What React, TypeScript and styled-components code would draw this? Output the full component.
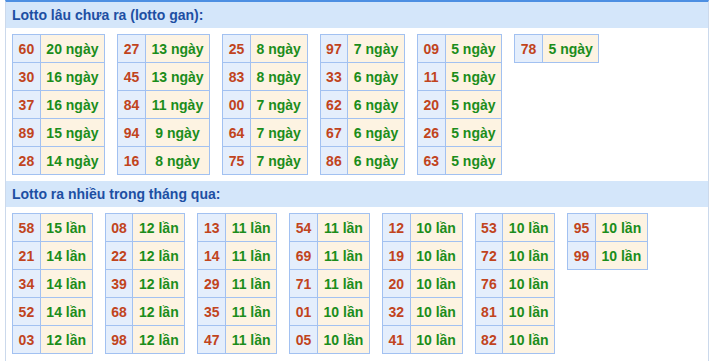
import React from "react";
import styled, { createGlobalStyle } from "styled-components";

const GlobalStyle = createGlobalStyle`
  html, body { margin: 0; padding: 0; background: #ffffff; }
  body { font-family: "Liberation Sans", Arial, sans-serif; }
`;

const Panel = styled.div`
  margin-left: 5px;
  width: 704px;
  box-sizing: border-box;
  border-top: 2px solid #4d8fe2;
  border-left: 1px solid #cbd9ec;
  border-right: 1px solid #cbd9ec;
  min-height: 370px;
`;

const SectionTitle = styled.div`
  height: 26px;
  line-height: 27px;
  padding-left: 6px;
  background: #d4e6fa;
  color: #1d4fa3;
  font-size: 14px;
  font-weight: bold;
`;

const Boards = styled.div`
  display: flex;
  flex-wrap: wrap;
  align-items: flex-start;
  gap: 12px;
  padding: 6px 0 6px 6px;
`;

const Board = styled.div`
  display: grid;
  grid-template-columns: auto auto;
  border-top: 1px solid #a2c1f1;
  border-left: 1px solid #a2c1f1;
`;

const Cell = styled.div<{ $kind: "num" | "val" }>`
  height: 27px;
  display: flex;
  align-items: center;
  justify-content: center;
  border-right: 1px solid #a2c1f1;
  border-bottom: 1px solid #a2c1f1;
  font-size: 14px;
  font-weight: bold;
  white-space: nowrap;
  padding: 0 5.6px;
  background: ${(p) => (p.$kind === "num" ? "#e4eefc" : "#fdf3e2")};
  color: ${(p) => (p.$kind === "num" ? "#c1441d" : "#1b8d1b")};
`;

type Pair = [string, number];

const gan: Pair[][] = [
  [["60", 20], ["30", 16], ["37", 16], ["89", 15], ["28", 14]],
  [["27", 13], ["45", 13], ["84", 11], ["94", 9], ["16", 8]],
  [["25", 8], ["83", 8], ["00", 7], ["64", 7], ["75", 7]],
  [["97", 7], ["33", 6], ["62", 6], ["67", 6], ["86", 6]],
  [["09", 5], ["11", 5], ["20", 5], ["26", 5], ["63", 5]],
  [["78", 5]],
];

const nhieu: Pair[][] = [
  [["58", 15], ["21", 14], ["34", 14], ["52", 14], ["03", 12]],
  [["08", 12], ["22", 12], ["39", 12], ["68", 12], ["98", 12]],
  [["13", 11], ["14", 11], ["29", 11], ["35", 11], ["47", 11]],
  [["54", 11], ["69", 11], ["71", 11], ["01", 10], ["05", 10]],
  [["12", 10], ["19", 10], ["20", 10], ["32", 10], ["41", 10]],
  [["53", 10], ["72", 10], ["76", 10], ["81", 10], ["82", 10]],
  [["95", 10], ["99", 10]],
];

function Section({ title, data, unit }: { title: string; data: Pair[][]; unit: string }) {
  return (
    <>
      <SectionTitle>{title}</SectionTitle>
      <Boards>
        {data.map((col, i) => (
          <Board key={i}>
            {col.map(([n, c]) => (
              <React.Fragment key={n}>
                <Cell $kind="num">{n}</Cell>
                <Cell $kind="val">{`${c} ${unit}`}</Cell>
              </React.Fragment>
            ))}
          </Board>
        ))}
      </Boards>
    </>
  );
}

export default function App() {
  return (
    <>
      <GlobalStyle />
      <Panel>
        <Section title="Lotto lâu chưa ra (lotto gan):" data={gan} unit="ngày" />
        <Section title="Lotto ra nhiều trong tháng qua:" data={nhieu} unit="lần" />
      </Panel>
    </>
  );
}
